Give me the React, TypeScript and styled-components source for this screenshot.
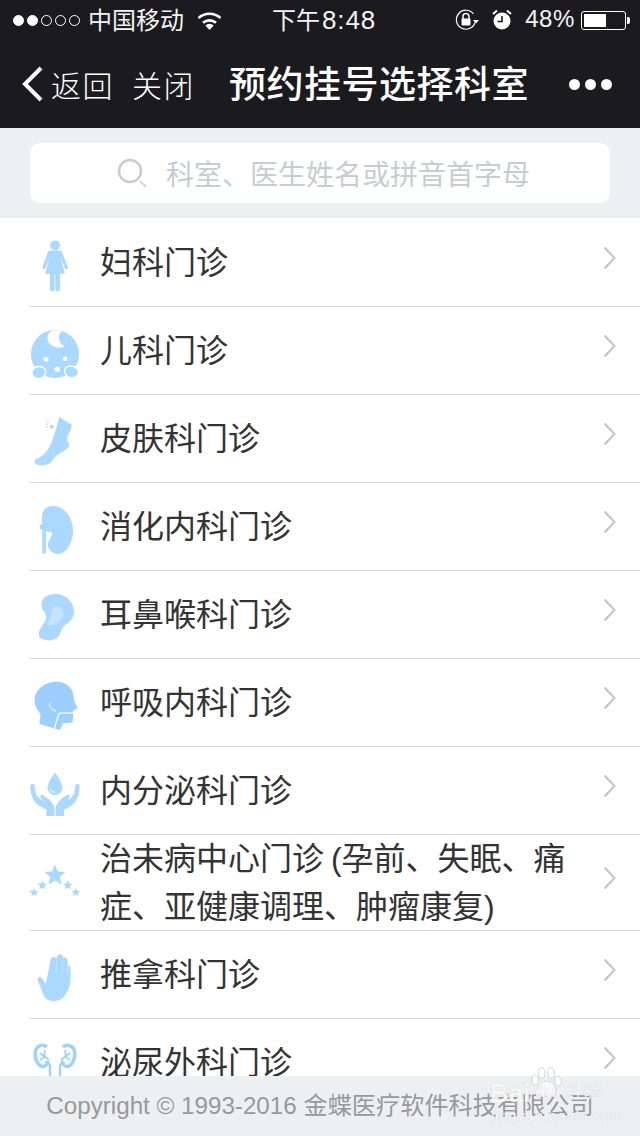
import React from "react";
import styled, { createGlobalStyle } from "styled-components";

const Global = createGlobalStyle`
  html, body { margin: 0; padding: 0; background: #fff; }
  * { box-sizing: border-box; }
`;

const CJK = `"Liberation Sans", "Noto Sans CJK SC", sans-serif`;

const Page = styled.div`
  position: relative;
  width: 640px;
  height: 1136px;
  overflow: hidden;
  background: #fff;
  font-family: ${CJK};
`;

const Header = styled.header`
  height: 128px;
  background: #1b1b1f;
  color: #fff;
  display: flex;
  flex-direction: column;
`;

const StatusBar = styled.div`
  position: relative;
  height: 40px;
  display: flex;
  align-items: center;
  padding: 0 10px 0 13px;
  font-size: 24px;
  color: #f4f4f4;
`;

const Signal = styled.div`
  display: flex;
  gap: 3px;
  margin-right: 8px;
`;

const Dot = styled.span<{ $on: boolean }>`
  width: 11px;
  height: 11px;
  border-radius: 50%;
  border: 1px solid #fff;
  background: ${(p) => (p.$on ? "#fff" : "transparent")};
`;

const Carrier = styled.span`
  margin: 0 13px 4px 0;
`;

const Clock = styled.span`
  position: absolute;
  left: 272px;
  top: 4px;
  line-height: 32px;
`;

const ClockDigits = styled.span`
  font-size: 26px;
  letter-spacing: 0.9px;
  margin-left: 2px;
`;

const StatusRight = styled.div`
  margin-left: auto;
  display: flex;
  align-items: center;
`;

const AlarmIcon = styled.svg`
  margin-left: 13px;
`;

const Percent = styled.span`
  margin: 0 6px 3px 13px;
  letter-spacing: 0.6px;
`;

const Battery = styled.div`
  width: 45px;
  height: 19px;
  border: 1px solid #fff;
  border-radius: 3px;
  padding: 2px;
`;

const BatteryFill = styled.div`
  height: 100%;
  background: #fff;
`;

const BatteryNub = styled.div`
  width: 3px;
  height: 7px;
  margin-left: 1px;
  background: #fff;
  border-radius: 0 2px 2px 0;
`;

const NavBar = styled.nav`
  flex: 1;
  display: flex;
  align-items: center;
  padding-left: 21px;
`;

const NavLink = styled.span<{ $gap: number }>`
  font-size: 30px;
  font-weight: 300;
  margin-left: ${(p) => p.$gap}px;
  letter-spacing: 1.5px;
`;

const Title = styled.h1`
  margin: 4px 0 0 34px;
  font-size: 37px;
  font-weight: 500;
  line-height: 44px;
  letter-spacing: 0.5px;
  white-space: nowrap;
`;

const More = styled.div`
  margin-left: 40px;
  display: flex;
  gap: 5px;
`;

const MoreDot = styled.span`
  width: 11px;
  height: 11px;
  border-radius: 50%;
  background: #fff;
`;

const SearchArea = styled.div`
  height: 90px;
  background: #edf0f3;
  padding: 15px 30px;
`;

const SearchBox = styled.div`
  height: 60px;
  border-radius: 10px;
  background: #fff;
  display: flex;
  align-items: center;
  padding-left: 87px;
  gap: 19px;
  color: #c5cdd4;
  font-size: 28px;
`;

const List = styled.ul`
  margin: 0;
  padding: 1px 0 0 30px;
  list-style: none;
`;

const Row = styled.li<{ $tall?: boolean }>`
  height: ${(p) => (p.$tall ? 96 : 88)}px;
  border-bottom: 1px solid #d9d9d9;
  display: flex;
  align-items: center;
  padding-right: 24px;
`;

const IconCell = styled.svg`
  width: 50px;
  height: 60px;
  flex: none;
  color: #aad8ff;
  fill: currentColor;
`;

const Label = styled.span`
  flex: 1;
  margin-left: 20px;
  font-size: 32px;
  line-height: 48px;
  color: #333;
  font-weight: 400;
  word-spacing: -2px;
`;

const Chevron = styled.svg`
  width: 13px;
  height: 24px;
  flex: none;
  margin-top: -10px;
  fill: none;
  stroke: #c4c4c8;
  stroke-width: 2;
`;

const Footer = styled.footer`
  position: absolute;
  left: 0;
  right: 0;
  bottom: 0;
  height: 60px;
  background: #edf0f3;
  color: #999;
  font-size: 24.2px;
  line-height: 60px;
  text-align: center;
  white-space: nowrap;
`;

const Watermark = styled.div`
  position: absolute;
  left: 490px;
  top: 1067px;
  width: 116px;
  height: 56px;
  color: rgba(255, 255, 255, 0.9);
  text-shadow: 0 0 1px rgba(150, 150, 150, 0.55);
`;

const MarkPaw = styled.svg`
  position: absolute;
  left: 40px;
  top: 0;
  width: 33px;
  height: 31px;
  fill: rgba(255, 255, 255, 0.75);
  stroke: rgba(190, 190, 190, 0.6);
  stroke-width: 1;
`;

const MarkBrand = styled.span`
  position: absolute;
  left: 0;
  top: 12px;
  font-size: 26px;
  font-weight: 700;
  line-height: 28px;
`;

const MarkDu = styled.span`
  position: absolute;
  left: 45px;
  top: 15px;
  font-size: 17px;
  font-weight: 700;
  line-height: 20px;
`;

const MarkCn = styled.span`
  position: absolute;
  left: 76px;
  top: 13px;
  font-size: 18px;
  line-height: 24px;
`;

const MarkUrl = styled.span`
  position: absolute;
  left: 1px;
  top: 41px;
  font-size: 15px;
  letter-spacing: 0.7px;
  line-height: 16px;
`;

const star = (cx: number, cy: number, r: number) => {
  const pts: string[] = [];
  for (let i = 0; i < 10; i++) {
    const rad = i % 2 ? r * 0.45 : r;
    const a = -Math.PI / 2 + (i * Math.PI) / 5;
    pts.push(`${(cx + rad * Math.cos(a)).toFixed(2)},${(cy + rad * Math.sin(a)).toFixed(2)}`);
  }
  return pts.join(" ");
};

const Woman = () => (
  <>
    <circle cx="25" cy="12.3" r="4.9" />
    <path d="M20.5 17.5h9q2 0 2.8 2.2l5.5 14q.6 1.8-.8 2.3-1.4.4-2-1L30.5 24.500L34.800 40.800H30V56a2.300 2.300 0 0 1-4.600 0V40.800h-.8V56a2.300 2.300 0 0 1-4.600 0V40.800H15.200L19.500 24.500L15.500 35q-.6 1.400-2 1-1.400-.5-.8-2.300l5-14q.8-2.200 2.800-2.200z" />
  </>
);

const Baby = () => (
  <>
    <circle cx="25" cy="33" r="24" />
    <path d="M17.500 17c0-4 2.500-7 6-7.500 3-.4 6 0 8.500 1-2.500 1.500-3.500 4-3 7 .5 3.500 2.500 6 5.500 8-4 2-9 1.500-12.500-1-3-2-4.500-4.500-4.500-7.500z" fill="#fff" />
    <circle cx="16" cy="38.300" r="2.500" fill="#fff" />
    <circle cx="35" cy="37.700" r="2.200" fill="#fff" />
    <circle cx="27.300" cy="48.300" r="2.700" fill="#fff" />
    <ellipse cx="8.800" cy="51.500" rx="7" ry="6" stroke="#fff" strokeWidth="1.500" transform="rotate(-15 8.800 51.500)" />
    <ellipse cx="41.500" cy="50.800" rx="7" ry="5.800" stroke="#fff" strokeWidth="1.500" transform="rotate(15 41.500 50.800)" />
  </>
);

const Foot = () => (
  <>
    <path d="M29.300 8l12.700 8q-2 7-4.500 11-1.500 3 .5 6 2.500 3 .5 5-2 3-8 6-4 2-7 6-4 6.500-12 6.500-6 0-7-4-.3-2 2.500-3 6-2 11-9 5-8 11.300-32.500z" />
    <circle cx="21.700" cy="17.700" r="1.900" />
    <path d="M16 14.500l2 1M17.500 12l1.200 1.800M15.500 18h2" stroke="currentColor" strokeWidth="1" fill="none" />
  </>
);

const Kidney = () => (
  <>
    <path d="M23 9c11 0 20 11 20 25 0 12-7 23-15 23-5 0-10-4-10-9 0-5 5-9 4-12-1-2-6-1-8-2-3-4-2-9-2-14 0-7 5-11 11-11z" />
    <rect x="12.300" y="33" width="3.700" height="23.500" />
    <circle cx="12.700" cy="30" r="3" />
    <path d="M16 38l6-2" stroke="#fff" strokeWidth="1" fill="none" />
  </>
);

const Ear = () => (
  <>
    <path d="M25 9c11 0 19 8 19 18 0 7-6 11-10 14-3 3-3 8-6 11-3 3-8 4-13 3-5-1-7-4-6-8 1-4 5-8 7-13 1-4-1-6-3-9-2-3-2-8 1-12 3-3 7-4 11-4z" />
    <path d="M25 21.500c5-.5 9 3 8.500 8-.5 5-5 8-9.500 10-3 1-6 1-8 0 3-3 5-7 5-11 0-3 1-6.500 4-7z" fill="#c4e3ff" />
  </>
);

const Head = () => (
  <g style={{ color: "#9ccfff" }}>
    <path d="M27 8.700c9 0 15 6 16.300 12.600 .5 3 .5 5 1 7l3 6c0 2-3 3-4.500 3.500l.7 4.200-.6 3-.2 3.500c-.5 1.500-3 1.500-4.700 1.500H33L30 57 9.500 51l1-10c-3-4-6-8-6-13.500C4.500 17 14 8.700 27 8.700z" />
    <path d="M24.300 55.500L28 43.500q.7-3 3-3.300l13-.3" stroke="#fff" strokeWidth="1.200" fill="none" />
    <path d="M21 29.500q-2.500 2-.5 5 2 2.500 5.500 3.500" stroke="#fff" strokeWidth="1" fill="none" />
  </g>
);

const Hands = () => (
  <>
    <path d="M25 11.500q7 9.500 7.500 15a7.500 7.500 0 0 1-15 0q.5-5.500 7.500-15z" />
    <path d="M20 28q1 3 5 3.500" stroke="#fff" strokeWidth="1" fill="none" />
    <path d="M.300 26q0-3 2-3.300 2.200 0 2.500 3l1 7 3.500 4.500 3.500 2.500-2.500-4q-.5-2 1.500-2 1.500 0 3 1.500 4 2.500 6.500 5.500 3.200 3.500 3.200 8V55H16.500v-6.500Q9 46 5 41 .500 34.500 .300 26z" />
    <path d="M49.700 26q0-3-2-3.300-2.200 0-2.500 3l-1 7-3.500 4.500-3.500 2.500 2.500-4q.5-2-1.500-2-1.500 0-3 1.500-4 2.500-6.500 5.500-3.200 3.500-3.200 8V55h8.500v-6.500Q41 46 45 41q4.500-6.500 4.700-15z" />
  </>
);

const Stars = () => (
  <>
    <polygon points={star(25, 22.500, 11)} />
    <polygon points={star(12.300, 32.300, 5)} />
    <polygon points={star(37.700, 32.300, 5)} />
    <polygon points={star(4, 39.500, 4.600)} />
    <polygon points={star(45.700, 39.500, 4.600)} />
  </>
);

const Palm = () => (
  <>
    <path d="M23.500 56c-5.500 0-9-2.500-10.500-7.500L7.800 35.500C7.200 33.500 8.300 32 10 32c1.500 0 2.300 1 3 2.500l2 4.500 1.500-3L20.500 15c.5-2 2-3 3.500-3 1.500 0 2.500 1 2.700 2.500.2-3 1.500-5.200 3.300-5.200s3.200 1.700 3.500 4c.6-.8 1.300-1 2-.8 1.500.4 2.200 2 2.200 4v4.700c.5-.4 1-.6 1.500-.4 1 .4 1.300 1.500 1.300 3V34c0 6-2 11-5 15.500-3 4.500-6.500 6.500-11.500 6.500z" />
    <path d="M26.700 14.500v14M32.800 14.500v13M37.500 20.500v9" stroke="#cfe8ff" strokeWidth="0.700" fill="none" />
  </>
);

const KidneyHalf = () => (
  <>
    <path d="M17 14C13 11 7 12 5.500 18 4 25 8 33 13 33.500c3 0 4.500-2.500 4-5.500" strokeWidth="3.500" />
    <path d="M10 20l9 7M15 17l-1 6M10 27l6-4" strokeWidth="1.800" />
    <path d="M16.500 28l3.500 4.500V44" strokeWidth="2.400" />
  </>
);

const Kidneys = () => (
  <g fill="none" stroke="#9ed2ff">
    <KidneyHalf />
    <g transform="matrix(-1 0 0 1 50 0)">
      <KidneyHalf />
    </g>
  </g>
);

const items: { name: string; Icon: React.FC; tall?: boolean }[] = [
  { name: "妇科门诊", Icon: Woman },
  { name: "儿科门诊", Icon: Baby },
  { name: "皮肤科门诊", Icon: Foot },
  { name: "消化内科门诊", Icon: Kidney },
  { name: "耳鼻喉科门诊", Icon: Ear },
  { name: "呼吸内科门诊", Icon: Head },
  { name: "内分泌科门诊", Icon: Hands },
  { name: "治未病中心门诊 (孕前、失眠、痛症、亚健康调理、肿瘤康复)", Icon: Stars, tall: true },
  { name: "推拿科门诊", Icon: Palm },
  { name: "泌尿外科门诊", Icon: Kidneys },
];

export default function App() {
  return (
    <Page>
      <Global />
      <Header>
        <StatusBar>
          <Signal>
            {[true, true, false, false, false].map((on, i) => (
              <Dot key={i} $on={on} />
            ))}
          </Signal>
          <Carrier>中国移动</Carrier>
          <svg width="25" height="19" viewBox="0 0 25 19" fill="none" stroke="#fff" strokeWidth="2.600">
            <path d="M1.500 7A16.500 16.500 0 0 1 23.500 7" />
            <path d="M6 11.800A10 10 0 0 1 19 11.800" />
            <path d="M12.500 19L8.300 14.500A6.200 6.200 0 0 1 16.700 14.500z" fill="#fff" stroke="none" />
          </svg>
          <Clock>
            下午<ClockDigits>8:48</ClockDigits>
          </Clock>
          <StatusRight>
            <svg width="24" height="22" viewBox="0 0 24 22" fill="none" stroke="#fff" strokeWidth="1.200">
              <path d="M20 13.500A9.500 9.500 0 1 1 18.500 5" />
              <path d="M18 11h6l-3 3.500z" fill="#fff" stroke="none" />
              <rect x="6.500" y="9.500" width="9" height="7" rx="1" fill="#fff" stroke="none" />
              <path d="M8 10V7.500a3 3 0 0 1 6 0V10" strokeWidth="1.500" />
            </svg>
            <AlarmIcon width="20" height="22" viewBox="0 0 20 22" fill="#fff">
              <circle cx="10" cy="12" r="8.500" />
              <path d="M10 7v5.500H5.500" stroke="#1b1b1f" strokeWidth="1.600" fill="none" />
              <path d="M1 5l4-3.500M19 5l-4-3.500" stroke="#fff" strokeWidth="2" />
            </AlarmIcon>
            <Percent>48%</Percent>
            <Battery>
              <BatteryFill style={{ width: "57%" }} />
            </Battery>
            <BatteryNub />
          </StatusRight>
        </StatusBar>
        <NavBar>
          <svg width="22" height="36" viewBox="0 0 22 36" fill="none" stroke="#fff" strokeWidth="4">
            <path d="M20 2L4 18l16 16" />
          </svg>
          <NavLink $gap={8}>返回</NavLink>
          <NavLink $gap={18}>关闭</NavLink>
          <Title>预约挂号选择科室</Title>
          <More>
            <MoreDot />
            <MoreDot />
            <MoreDot />
          </More>
        </NavBar>
      </Header>
      <SearchArea>
        <SearchBox>
          <svg width="30" height="30" viewBox="0 0 30 30" fill="none" stroke="#c5cdd4" strokeWidth="2.500">
            <circle cx="13" cy="13" r="11" />
            <path d="M23 23l6 6" strokeWidth="1.600" />
          </svg>
          <span>科室、医生姓名或拼音首字母</span>
        </SearchBox>
      </SearchArea>
      <List>
        {items.map(({ name, Icon, tall }) => (
          <Row key={name} $tall={tall}>
            <IconCell viewBox="0 0 50 60">
              <Icon />
            </IconCell>
            <Label>{name}</Label>
            <Chevron viewBox="0 0 13 24">
              <path d="M1.500 1.500L11.500 12L1.500 22.500" />
            </Chevron>
          </Row>
        ))}
      </List>
      <Footer>Copyright © 1993-2016 金蝶医疗软件科技有限公司</Footer>
      <Watermark>
        <MarkPaw viewBox="0 0 33 31">
          <ellipse cx="5" cy="13" rx="3.500" ry="5" />
          <ellipse cx="11.500" cy="6" rx="3.500" ry="5.500" />
          <ellipse cx="21" cy="6" rx="3.500" ry="5.500" />
          <ellipse cx="28" cy="14" rx="3.500" ry="5" />
          <path d="M16.500 14c-5 0-9.500 5-9.500 10 0 5 5 6 9.500 5 4.500 1 9.500 0 9.500-5 0-5-4.500-10-9.500-10z" />
        </MarkPaw>
        <MarkBrand>Bai</MarkBrand>
        <MarkDu>du</MarkDu>
        <MarkCn>经验</MarkCn>
        <MarkUrl>jingyan.baidu.com</MarkUrl>
      </Watermark>
    </Page>
  );
}
